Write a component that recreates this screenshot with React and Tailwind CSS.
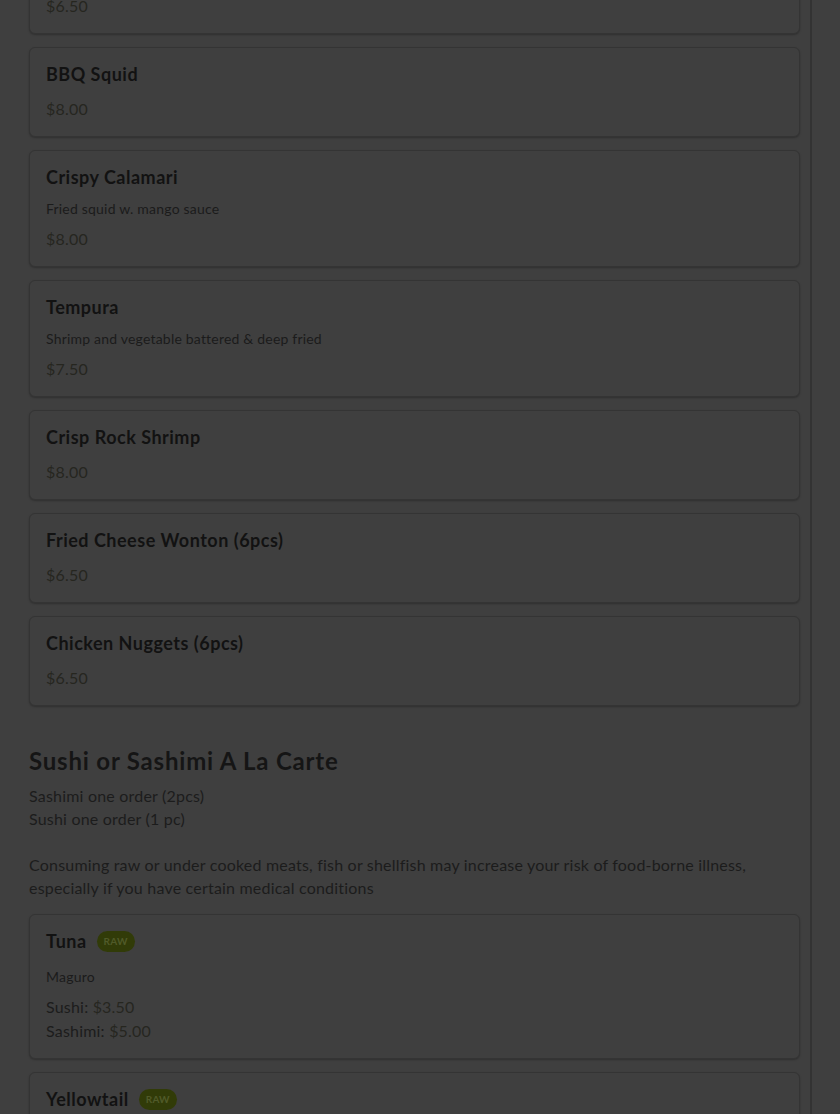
const appetizers = [
    { name: 'Edamame', price: '$6.50' },
    { name: 'BBQ Squid', price: '$8.00' },
    { name: 'Crispy Calamari', desc: 'Fried squid w. mango sauce', price: '$8.00' },
    { name: 'Tempura', desc: 'Shrimp and vegetable battered & deep fried', price: '$7.50' },
    { name: 'Crisp Rock Shrimp', price: '$8.00' },
    { name: 'Fried Cheese Wonton (6pcs)', price: '$6.50' },
    { name: 'Chicken Nuggets (6pcs)', price: '$6.50' },
];

const alaCarte = [
    { name: 'Tuna', desc: 'Maguro', sushi: '$3.50', sashimi: '$5.00' },
    { name: 'Yellowtail', desc: 'Hamachi', sushi: '$3.50', sashimi: '$5.00' },
];

const Card = ({ children }) => (
    <div className="rounded-md border border-[#343434] bg-[#3f3f3f] px-4 py-[15px] shadow-[0_1px_2px_rgba(0,0,0,0.25)]">
        {children}
    </div>
);

const RawBadge = () => (
    <span className="inline-flex h-[21px] items-center rounded-full bg-[#313b08] px-[7px] text-[10px] font-bold tracking-wide text-[#505a29]">
        RAW
    </span>
);

export default function App() {
    return (
        <div
            className="flex h-[1114px] overflow-hidden bg-[#3f3f3f]"
            style={{ fontFamily: 'Lato, "Noto Sans", sans-serif' }}
        >
            {/* Menu column */}
            <div className="w-[812px] shrink-0 border-r-2 border-[#333333] pl-[29px] pr-[10px]">
                <div className="-mt-[56px] flex flex-col gap-[13px]">
                    {appetizers.map((item) => (
                        <Card key={item.name}>
                            <h3 className="text-[18px] font-bold leading-[22px] tracking-[0.5px] text-[#121212]">
                                {item.name}
                            </h3>
                            {item.desc && (
                                <p className="mt-[9px] text-[14px] leading-6 tracking-[0.2px] text-[#1b1b1b]">{item.desc}</p>
                            )}
                            <p className={`${item.desc ? 'mt-[6px]' : 'mt-3'} text-base leading-6 tracking-[0.2px] text-[#26261f]`}>
                                {item.price}
                            </p>
                        </Card>
                    ))}
                </div>

                {/* Sushi section */}
                <h2 className="mt-[39px] text-2xl font-bold leading-8 tracking-[0.8px] text-[#151515]">
                    Sushi or Sashimi A La Carte
                </h2>
                <p className="mt-[7px] text-base leading-[23px] tracking-[0.2px] text-[#1c1c1c]">
                    Sashimi one order (2pcs)
                    <br />
                    Sushi one order (1 pc)
                    <br />
                    <br />
                    Consuming raw or under cooked meats, fish or shellfish may increase your risk of food-borne illness,
                    <br />
                    especially if you have certain medical conditions
                </p>

                <div className="mt-[15px] flex flex-col gap-[13px]">
                    {alaCarte.map((item) => (
                        <Card key={item.name}>
                            <div className="flex h-[22px] items-center gap-[10px]">
                                <h3 className="text-[18px] font-bold leading-[22px] tracking-[0.5px] text-[#121212]">
                                    {item.name}
                                </h3>
                                <RawBadge />
                            </div>
                            <p className="mt-[13px] text-[14px] leading-6 tracking-[0.2px] text-[#1b1b1b]">{item.desc}</p>
                            <p className="mt-[6px] text-base leading-6 tracking-[0.2px] text-[#1c1c1c]">
                                Sushi: <span className="text-[#26261f]">{item.sushi}</span>
                            </p>
                            <p className="text-base leading-6 tracking-[0.2px] text-[#1c1c1c]">
                                Sashimi: <span className="text-[#26261f]">{item.sashimi}</span>
                            </p>
                        </Card>
                    ))}
                </div>
            </div>

            <div className="flex-1" />
        </div>
    );
}
